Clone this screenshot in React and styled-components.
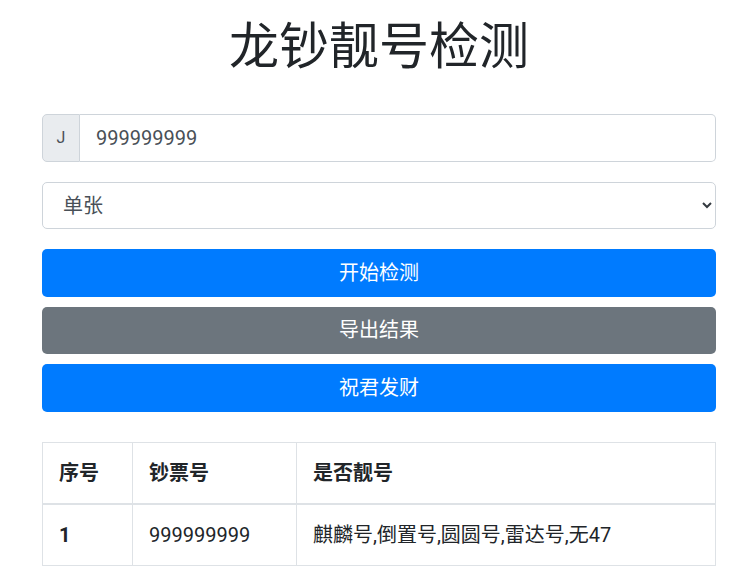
import React, { useState } from 'react';
import styled, { createGlobalStyle } from 'styled-components';

const GlobalStyle = createGlobalStyle`
  * { box-sizing: border-box; }
  body {
    margin: 0;
    background: #ffffff;
    color: #212529;
    font-family: Roboto, "Noto Sans CJK SC", sans-serif;
    font-size: 16px;
    line-height: 1.5;
  }
`

const Page = styled.div`
  width: 674px;
  margin: 0 0 0 42px;
  padding-top: 17px;
`

const Title = styled.h1`
  margin: 0 0 37px;
  text-align: center;
  font-size: 50px;
  font-weight: 400;
  line-height: 1.2;
  color: #212529;
`

const InputGroup = styled.div`
  display: flex;
  height: 48px;
  margin-bottom: 20px;
`

const Prepend = styled.span`
  display: flex;
  align-items: center;
  justify-content: center;
  width: 38px;
  background: #e9ecef;
  border: 1px solid #ced4da;
  border-radius: 5px 0 0 5px;
  color: #495057;
  font-size: 16px;
`

const TextInput = styled.input`
  flex: 1;
  min-width: 0;
  border: 1px solid #ced4da;
  border-left: none;
  border-radius: 0 5px 5px 0;
  padding: 0 16px;
  font: inherit;
  font-size: 20px;
  color: #495057;
  outline: none;
`

const SelectWrap = styled.div`
  position: relative;
  margin-bottom: 20px;
`

const Select = styled.select`
  display: block;
  width: 100%;
  height: 47px;
  padding: 0 40px 0 20px;
  border: 1px solid #ced4da;
  border-radius: 5px;
  background: #ffffff;
  appearance: none;
  font: inherit;
  font-size: 20px;
  color: #495057;
  outline: none;
`

const Chevron = styled.svg`
  position: absolute;
  right: 4px;
  top: 18px;
  width: 10px;
  height: 10px;
  pointer-events: none;
`

const Buttons = styled.div`
  display: flex;
  flex-direction: column;
  gap: 10px;
  margin-bottom: 30.5px;
`

const Button = styled.button`
  height: 47.5px;
  border: none;
  border-radius: 5px;
  background: ${({ $variant }) => ($variant === 'secondary' ? '#6c757d' : '#007bff')};
  color: #ffffff;
  font: inherit;
  font-size: 20px;
  cursor: pointer;
`

const Table = styled.table`
  width: 100%;
  border-collapse: collapse;
  font-size: 20px;
  color: #212529;

  th, td {
    border: 1px solid #dee2e6;
    padding: 15px 16px;
    text-align: left;
    vertical-align: top;
    line-height: 30px;
  }

  th { font-weight: 700; }
  thead th { border-bottom-width: 2px; }
  td.index { font-weight: 700; }
`

const Col = styled.col`
  width: ${({ $width }) => $width || 'auto'};
`

const rows = [{ id: 1, number: '999999999', result: '麒麟号,倒置号,圆圆号,雷达号,无47' }]

export default function App() {
  const [serial, setSerial] = useState('999999999')
  const [mode, setMode] = useState('single')

  return (
    <Page>
      <GlobalStyle />
      <Title>龙钞靓号检测</Title>
      <InputGroup>
        <Prepend>J</Prepend>
        <TextInput value={serial} onChange={e => setSerial(e.target.value)} />
      </InputGroup>
      <SelectWrap>
        <Select value={mode} onChange={e => setMode(e.target.value)}>
          <option value="single">单张</option>
          <option value="batch">批量</option>
        </Select>
        <Chevron viewBox="0 0 10 10">
          <path d="M1 3 L5 7 L9 3" fill="none" stroke="#343a40" strokeWidth="2" />
        </Chevron>
      </SelectWrap>
      <Buttons>
        <Button>开始检测</Button>
        <Button $variant="secondary">导出结果</Button>
        <Button>祝君发财</Button>
      </Buttons>
      <Table>
        <colgroup>
          <Col $width="90px" />
          <Col $width="164px" />
          <Col />
        </colgroup>
        <thead>
          <tr>
            <th>序号</th>
            <th>钞票号</th>
            <th>是否靓号</th>
          </tr>
        </thead>
        <tbody>
          {rows.map(row => (
            <tr key={row.id}>
              <td className="index">{row.id}</td>
              <td>{row.number}</td>
              <td>{row.result}</td>
            </tr>
          ))}
        </tbody>
      </Table>
    </Page>
  )
}
